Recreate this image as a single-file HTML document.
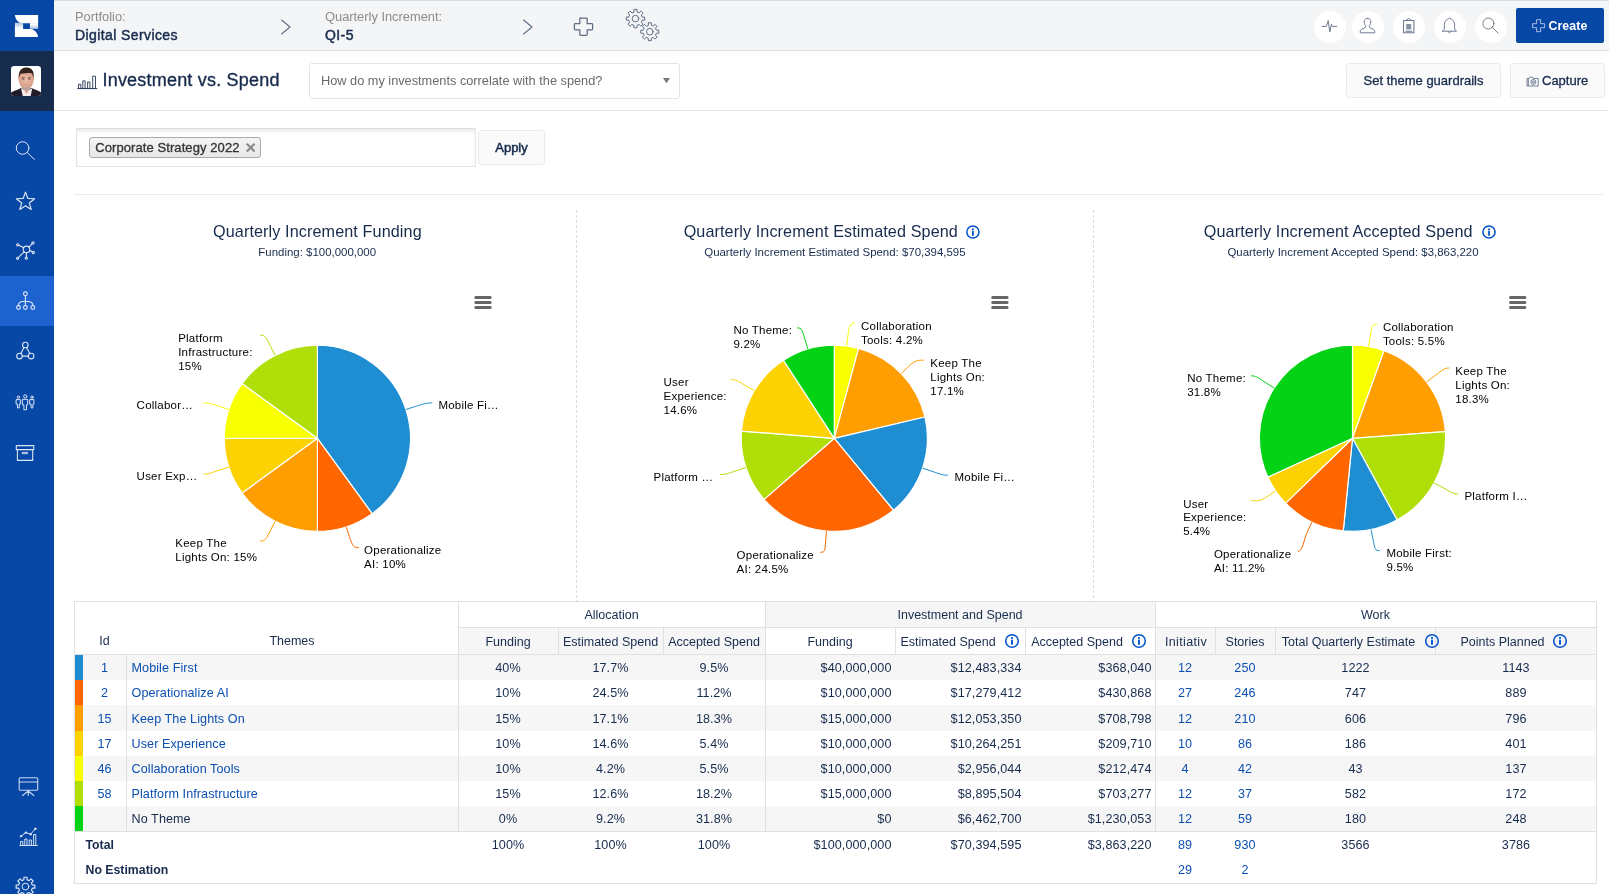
<!DOCTYPE html>
<html>
<head>
<meta charset="utf-8">
<title>Investment vs. Spend</title>
<style>
*{box-sizing:border-box;margin:0;padding:0}
html,body{width:1609px;height:894px;overflow:hidden;background:#fff}
body{will-change:transform;font-family:"Liberation Sans",sans-serif;color:#172b4d;position:relative;font-size:13px}
.abs{position:absolute}
/* sidebar */
#side{position:absolute;left:0;top:0;width:54px;height:894px;background:#0747a6}
#side .av{position:absolute;left:0;top:51px;width:54px;height:60px;background:#172b4d}
#side .sel{position:absolute;left:0;top:276px;width:54px;height:50px;background:#1d62ce}
#side svg{position:absolute;overflow:visible}
/* top bar */
#top{position:absolute;left:54px;top:0;width:1555px;height:51px;background:#f4f5f7;border-bottom:1px solid #dfe1e6;border-top:1px solid #d9dbe0}
.lbl{position:absolute;font-size:12.85px;color:#8c8c8c;white-space:nowrap;line-height:16px}
.val{position:absolute;font-size:14px;color:#172b4d;white-space:nowrap;line-height:18px;letter-spacing:0.4px;-webkit-text-stroke:0.45px #172b4d}
.circ{position:absolute;width:32px;height:32px;border-radius:50%;background:#fff;top:10.5px}
#create{position:absolute;left:1516px;top:8px;width:88px;height:35px;background:#0747a6;border-radius:2px;color:#fff;font-weight:bold;font-size:12.3px;line-height:37px}
/* header row */
#hdr{position:absolute;left:54px;top:51px;width:1555px;height:60px;border-bottom:1px solid #e4e6ea}
#title{position:absolute;left:102.5px;top:68px;font-size:18px;letter-spacing:0.2px;line-height:24px;color:#172b4d;white-space:nowrap;-webkit-text-stroke:0.35px #172b4d}
#dd{position:absolute;left:309px;top:63px;width:371px;height:36px;border:1px solid #e3e4e8;border-radius:3px;background:#fff;font-size:12.75px;color:#6a6a6a;line-height:34px;padding-left:11px;white-space:nowrap}
.btn{position:absolute;height:35px;background:#fafafa;border:1px solid #ebebeb;border-radius:3px;font-size:13px;line-height:33px;color:#172b4d;white-space:nowrap;text-align:center;-webkit-text-stroke:0.3px #172b4d}
#fbox{position:absolute;left:76px;top:128px;width:400px;height:39px;border:1px solid #e6e6e6;border-top-color:#dedede;background:#fff;box-shadow:inset 0 3px 4px -1px rgba(0,0,0,0.09)}
#tag{position:absolute;left:89px;top:137px;width:172px;height:21px;border:1px solid #aaa;border-radius:3px;background:linear-gradient(#f4f4f4,#e8e8e8);font-size:13px;line-height:19px;color:#333;padding-left:5.3px;white-space:nowrap;letter-spacing:0.08px;-webkit-text-stroke:0.3px #333}
#hr{position:absolute;left:74px;top:194px;width:1529px;height:1px;background:#e9ebee}
.vd{position:absolute;top:210px;height:391px;width:1px;background:repeating-linear-gradient(to bottom,#dcdcdc 0,#dcdcdc 3px,transparent 3px,transparent 5px)}
.ct{position:absolute;font-size:16.2px;letter-spacing:0.1px;line-height:20px;color:#172b4d;white-space:nowrap;text-align:center;transform:translateX(-50%)}
.cs{position:absolute;font-size:11.45px;line-height:14px;color:#172b4d;white-space:nowrap;text-align:center;transform:translateX(-50%)}
.tc{position:absolute;font-size:12.6px;letter-spacing:0.08px;line-height:15px;color:#172b4d;white-space:nowrap}
.tc.th{font-size:12.5px;letter-spacing:0}
.tc.lk{color:#0b4fb0}
.tc.b{font-weight:bold;font-size:12.3px;letter-spacing:0}
svg text{font-family:"Liberation Sans",sans-serif}
</style>
</head>
<body>
<div id="side">
  <div class="av"></div>
  <div class="sel"></div>

<svg style="left:0;top:0" width="54" height="894" viewBox="0 0 54 894" fill="none" stroke="#dde6f6" stroke-width="1" stroke-linecap="round" stroke-linejoin="round">
  <!-- logo -->
  <defs><linearGradient id="lg1" x1="0" y1="0" x2="0" y2="1"><stop offset="0" stop-color="#a9bfe2"/><stop offset="0.9" stop-color="#ffffff"/></linearGradient>
  <linearGradient id="lg2" x1="0" y1="0" x2="0" y2="1"><stop offset="0.2" stop-color="#ffffff"/><stop offset="1" stop-color="#a9bfe2"/></linearGradient></defs>
  <g stroke="none">
  <path d="M14.900,14.900 H38.100 V23.200 H22 C18,22.600 15.500,19.500 14.900,14.900Z" fill="#fff"/>
  <path d="M29.900,23.100 H38.100 V28.900 H29.900Z" fill="url(#lg2)"/>
  <path d="M14.900,22.700 H23.100 V29 H14.900Z" fill="url(#lg1)"/>
  <path d="M14.900,28.900 H31 C34.500,29.500 37.500,32.500 38.100,37 H14.900Z" fill="#fff"/>
  </g>
  <!-- search -->
  <circle cx="22.600" cy="148" r="6.300"/><path d="M27.200,152.600 L34.400,159.400"/>
  <!-- star -->
  <path d="M25.50,192.10 L27.85,198.46 L34.63,198.73 L29.30,202.94 L31.14,209.47 L25.50,205.70 L19.86,209.47 L21.70,202.94 L16.37,198.73 L23.15,198.46Z" stroke-width="1.2"/>
  <!-- network -->
  <g stroke-width="1.1"><circle cx="26.500" cy="249.400" r="3.300"/>
  <path d="M23.800,247.700 L18.800,245.300 M29,247.200 L32.200,243.700 M29.800,250.300 L32.200,252 M26.400,252.700 V257 M24.200,251.800 L18.400,257.400"/>
  <circle cx="17.700" cy="244.800" r="1.100"/><circle cx="33" cy="242.900" r="1.100"/><circle cx="33.300" cy="252.500" r="1.100"/><circle cx="26.300" cy="258.200" r="1.100"/><circle cx="17.600" cy="258.300" r="1.100"/></g>
  <!-- hierarchy -->
  <g stroke-width="1.100"><circle cx="25.400" cy="293.800" r="1.900"/><path d="M25.400,295.800 V305.500 M18.500,305.500 V304.800 C18.500,302 21,301.200 25.400,301.200 C29.800,301.200 32.800,302 32.800,304.800 V305.500"/>
  <circle cx="18.500" cy="307.500" r="1.900"/><circle cx="25.400" cy="307.500" r="1.900"/><circle cx="32.800" cy="307.500" r="1.900"/></g>
  <!-- triangle -->
  <g stroke-width="1.100"><circle cx="25.300" cy="345" r="2.800"/><circle cx="19.500" cy="356.100" r="2.800"/><circle cx="31.100" cy="356.100" r="2.800"/>
  <path d="M24,347.500 L20.800,353.600 M26.600,347.500 L29.800,353.600 M22.300,356.100 H28.300"/></g>
  <!-- people -->
  <g stroke-width="1"><circle cx="25.200" cy="396.400" r="1.600"/><path d="M22.700,399.300 h5 v5.500 h-1.200 v5 h-2.600 v-5 h-1.200z"/>
  <circle cx="18.400" cy="397.200" r="1.200"/><path d="M16.500,399.600 h3.800 v4.500 h-1 v3.800 h-1.800 v-3.800 h-1z"/>
  <circle cx="32" cy="397.200" r="1.200"/><path d="M30.100,399.600 h3.800 v4.500 h-1 v3.800 h-1.800 v-3.800 h-1z"/></g>
  <!-- archive -->
  <g stroke-width="1.100"><path d="M16.300,445.600 H33.800 V449.600 H16.300Z M17.400,449.600 V460.400 H32.700 V449.600"/><path d="M22.600,452.400 h5 v1.300 h-5z" stroke-width="0.900"/></g>
  <!-- presentation -->
  <g stroke-width="1.100" stroke="#c9d6ee"><rect x="19.200" y="777.800" width="18.500" height="12.500" rx="1"/><path d="M19.200,782 H37.700 M28.300,790.300 V795.500 M28.300,791 L22.500,795.500 M28.300,791 L33.800,795.500"/></g>
  <!-- chart -->
  <g stroke-width="1" stroke="#d5e0f3"><path d="M19.800,845.500 H37.400 M20.600,845.500 v-4 h2.200 v4 M24.800,845.500 v-6.500 h2.200 v6.500 M29.200,845.500 v-5.500 h2.200 v5.500 M33.600,845.500 v-11 h2.200 v11"/>
  <path d="M21.200,836 L25.800,832.700 L30.600,834.200 L35.200,829"/><circle cx="21" cy="836.200" r=".8" fill="#d5e0f3"/><circle cx="25.900" cy="832.600" r=".8" fill="#d5e0f3"/><circle cx="30.700" cy="834.300" r=".8" fill="#d5e0f3"/><circle cx="35.300" cy="828.800" r=".8" fill="#d5e0f3"/></g>
  <!-- gear -->
  <path d="M23.92,879.78 L23.94,877.23 L27.06,877.23 L27.08,879.78 L29.20,880.66 L31.02,878.87 L33.23,881.08 L31.44,882.90 L32.32,885.02 L34.87,885.04 L34.87,888.16 L32.32,888.18 L31.44,890.30 L33.23,892.12 L31.02,894.33 L29.20,892.54 L27.08,893.42 L27.06,895.97 L23.94,895.97 L23.92,893.42 L21.80,892.54 L19.98,894.33 L17.77,892.12 L19.56,890.30 L18.68,888.18 L16.13,888.16 L16.13,885.04 L18.68,885.02 L19.56,882.90 L17.77,881.08 L19.98,878.87 L21.80,880.66Z" stroke-width="1.200"/><circle cx="25.500" cy="886.600" r="3.400"/>
</svg>
<svg style="left:11px;top:66px" width="30" height="30" viewBox="0 0 30 30">
  <defs><clipPath id="avc"><rect x="0" y="0" width="30" height="30" rx="3.200"/></clipPath>
  <filter id="avb" x="-10%" y="-10%" width="120%" height="120%"><feGaussianBlur stdDeviation="0.550"/></filter>
  <radialGradient id="avf" cx="0.5" cy="0.45" r="0.6"><stop offset="0" stop-color="#e9bda8"/><stop offset="0.7" stop-color="#dca38c"/><stop offset="1" stop-color="#c98f7b"/></radialGradient></defs>
  <g clip-path="url(#avc)">
    <rect width="30" height="30" fill="#ffffff"/>
    <g filter="url(#avb)">
    <path d="M-1,31 V27 C3,25 7,23.500 10,22 L15,24 L20.500,22 C24,23.500 28,25 31,27 V31Z" fill="#231f2c"/>
    <path d="M10,22.500 L12,31 H19.500 L21.200,22.500 L15.500,24.500Z" fill="#f6eaee"/>
    <path d="M12.300,22 L15.500,28 L18.800,22Z" fill="#d79a84"/>
    <path d="M7.700,11.500 C7.500,8 9.500,5 15.200,5 C21,5 22.900,8 22.700,11.500 C23.300,12 23.200,14 22.500,14.800 C22,19.500 19,24 15.200,24 C11.500,24 8.500,19.500 7.900,14.800 C7.200,14 7.100,12 7.700,11.500Z" fill="url(#avf)"/>
    <path d="M11,19 C12,21 13.500,21.300 15.200,21.300 C17,21.300 18.500,21 19.500,19 C19.500,22 17.500,24.200 15.200,24.200 C13,24.200 11,22 11,19Z" fill="#b9a39c"/>
    <path d="M12.200,18.300 Q15.200,19.800 18.300,18.300 Q15.200,19 12.200,18.300Z" fill="#a8645a"/>
    <path d="M7.900,12.500 C7,6.500 9.500,1.500 15,1.500 C19,1.500 20.500,3 21,4 C22.600,5 23,9 22.400,12.500 C22,9.500 21.300,8 20.500,7.300 C17.500,6.300 13,8 9.700,7.500 C8.700,8.500 8.200,10.500 7.900,12.500Z" fill="#33211d"/>
    <ellipse cx="12.200" cy="13" rx="1.300" ry=".55" fill="#5a3a33"/><ellipse cx="18.300" cy="13" rx="1.300" ry=".55" fill="#5a3a33"/>
    <path d="M10.500,11.700 h3.200 M16.800,11.700 h3.200" stroke="#4a302a" stroke-width=".6"/>
    </g>
  </g>
</svg>
</div>
<div id="top"></div>
<div class="lbl" style="left:75px;top:9px">Portfolio:</div>
<div class="val" style="left:75px;top:26px">Digital Services</div>
<div class="lbl" style="left:325px;top:9px">Quarterly Increment:</div>
<div class="val" style="left:325px;top:26px">QI-5</div>
<svg class="abs" style="left:0;top:0" width="1609" height="52" viewBox="0 0 1609 52" fill="none" stroke="#5e6c84" stroke-width="1.05" stroke-linecap="round" stroke-linejoin="round">
  <path d="M281.6,20 L290,27 L281.6,34"/>
  <path d="M523.6,20 L532,27 L523.6,34"/>
  <path d="M580.6,18 h5.8 a0.8,0.8 0 0 1 .8,.8 v4.9 h4.6 a0.8,0.8 0 0 1 .8,.8 v4.6 a0.8,0.8 0 0 1 -.8,.8 h-4.6 v4.6 a0.8,0.8 0 0 1 -.8,.8 h-5.8 a0.8,0.8 0 0 1 -.8,-.8 v-4.6 h-4.6 a0.8,0.8 0 0 1 -.8,-.8 v-4.6 a0.8,0.8 0 0 1 .8,-.8 h4.6 v-4.9 a0.8,0.8 0 0 1 .8,-.8z" stroke-width="1.25"/>
  <path d="M633.94,11.88 L633.97,9.43 L637.03,9.43 L637.06,11.88 L639.15,12.75 L640.91,11.03 L643.07,13.19 L641.35,14.95 L642.22,17.04 L644.67,17.07 L644.67,20.13 L642.22,20.16 L641.35,22.25 L643.07,24.01 L640.91,26.17 L639.15,24.45 L637.06,25.32 L637.03,27.77 L633.97,27.77 L633.94,25.32 L631.85,24.45 L630.09,26.17 L627.93,24.01 L629.65,22.25 L628.78,20.16 L626.33,20.13 L626.33,17.07 L628.78,17.04 L629.65,14.95 L627.93,13.19 L630.09,11.03 L631.85,12.75Z" stroke-width="1"/><circle cx="635.5" cy="18.6" r="3.3" stroke-width="1"/>
  <path d="M648.29,25.17 L648.31,22.72 L651.29,22.72 L651.31,25.17 L653.35,26.01 L655.09,24.30 L657.20,26.41 L655.49,28.15 L656.33,30.19 L658.78,30.21 L658.78,33.19 L656.33,33.21 L655.49,35.25 L657.20,36.99 L655.09,39.10 L653.35,37.39 L651.31,38.23 L651.29,40.68 L648.31,40.68 L648.29,38.23 L646.25,37.39 L644.51,39.10 L642.40,36.99 L644.11,35.25 L643.27,33.21 L640.82,33.19 L640.82,30.21 L643.27,30.19 L644.11,28.15 L642.40,26.41 L644.51,24.30 L646.25,26.01Z" stroke-width="1"/><circle cx="649.8" cy="31.7" r="3.3" stroke-width="1"/>
</svg>
<div class="circ" style="left:1314px"></div>
<div class="circ" style="left:1352px"></div>
<div class="circ" style="left:1393px"></div>
<div class="circ" style="left:1434px"></div>
<div class="circ" style="left:1475px"></div>
<svg class="abs" style="left:0;top:0" width="1609" height="52" viewBox="0 0 1609 52" fill="none" stroke="#6f7b93" stroke-width="1" stroke-linecap="round" stroke-linejoin="round">
  <!-- pulse -->
  <path d="M1322,26.4 H1326.3 L1328.2,20.6 L1329.8,32 L1331.4,24.3 L1332.4,26.4 H1336.8" stroke-width="1"/>
  <!-- person -->
  <path d="M1367.6,18.3 c-2.3,0 -3.5,1.6 -3.4,3.8 c.1,1.7 .7,2.8 1.4,3.6 c.2,.9 .1,1.6 -.5,2 l-3.4,1.5 c-1,.5 -1.5,1.400 -1.500,2.500 v1.100 h14.600 v-1.100 c0,-1.100 -.5,-2 -1.500,-2.500 l-3.400,-1.500 c-.6,-.4 -.7,-1.100 -.5,-2 c.7,-.8 1.300,-1.900 1.400,-3.600 c.1,-2.200 -1.100,-3.800 -3.200,-3.800z"/>
  <!-- clipboard -->
  <path d="M1403.500,20.500 h10.400 v12.300 h-10.400z" stroke-width="1.100"/>
  <path d="M1406.300,20.300 l2.400,-2 l2.400,2"/>
  <rect x="1406.200" y="24" width="5" height="5.500" fill="#8892a6" stroke="none"/>
  <path d="M1405.800,31.300 h6"/>
  <!-- bell -->
  <path d="M1442.500,31.200 H1456.500 L1454.600,28.800 V24.200 C1454.600,21.600 1452.600,19.600 1449.500,18.100 C1446.400,19.600 1444.400,21.600 1444.400,24.200 V28.800Z"/>
  <path d="M1448,31.600 l1.500,1.200 l1.500,-1.200"/>
</svg>
<svg class="abs" style="left:0;top:0" width="1609" height="52" viewBox="0 0 1609 52" fill="none" stroke="#757575" stroke-width="0.95" stroke-linecap="round">
  <circle cx="1488.400" cy="23.500" r="5.500"/><path d="M1492.400,27.500 L1498,33"/>
</svg>
<div id="create"><span style="position:absolute;left:32.500px;top:0;letter-spacing:0.1px">Create</span>
<svg class="abs" style="left:0;top:0" width="88" height="35" viewBox="0 0 88 35" fill="none" stroke="#c4d3ee" stroke-width="0.85" stroke-linejoin="round"><path d="M20.600,11.700 h4 v4 h4 v4 h-4 v4 h-4 v-4 h-4 v-4 h4z"/></svg>
</div>

<div id="hdr"></div>
<div id="title">Investment vs. Spend</div>
<div id="dd">How do my investments correlate with the spend?</div>
<div id="fbox"></div>
<div id="tag">Corporate Strategy 2022</div>

<svg class="abs" style="left:74px;top:70px" width="28" height="22" viewBox="74 70 28 22" fill="none" stroke="#253858" stroke-width="0.9">
  <path d="M77.200,88.600 H97.200" stroke-width="1"/>
  <path d="M78.500,88.600 V84.300 H80.800 V88.600 M82.800,88.600 V80.900 H85.100 V88.600 M87.600,88.600 V82 H89.900 V88.600 M92.700,88.600 V76.200 H95.500 V88.600"/>
</svg>
<svg class="abs" style="left:660px;top:74px" width="14" height="12" viewBox="660 74 14 12"><path d="M663,78.100 H670 L666.500,83.200Z" fill="#777"/></svg>
<div class="btn" style="left:1346px;top:63px;width:155px"><span id="b1">Set theme guardrails</span></div>
<div class="btn" style="left:1510px;top:63px;width:95px"><span id="b2" style="position:absolute;left:31px;top:0">Capture</span>
<svg class="abs" style="left:15px;top:12px" width="14" height="12" viewBox="0 0 14 12" fill="none" stroke="#66738c" stroke-width="0.9"><path d="M1,2.500 h2 l.6,-1.300 h3 l.6,1.300 h5 v7.500 h-11.200z"/><circle cx="7.300" cy="6" r="2.500"/><circle cx="7.300" cy="6" r="1"/><path d="M2.300,2.500 v7.500"/></svg>
</div>
<div class="btn" style="left:478px;top:130px;width:67px" id="apply"><span id="b3" style="-webkit-text-stroke:0.5px #172b4d">Apply</span></div>
<svg class="abs" style="left:244px;top:141px" width="13" height="13" viewBox="244 141 13 13" stroke="#8a8a8a" stroke-width="2.200" fill="none"><path d="M246.800,143.800 L254.600,151.500 M254.600,143.800 L246.800,151.500"/></svg>
<div id="hr"></div>
<div class="vd" style="left:576px"></div>
<div class="vd" style="left:1093px"></div>
<!--CHARTS-->
<div class="ct" style="left:317.4px;top:221px">Quarterly Increment Funding</div>
<div class="cs" style="left:317.2px;top:245px">Funding: $100,000,000</div>
<div class="ct" style="left:820.8px;top:221px">Quarterly Increment Estimated Spend</div>
<div class="cs" style="left:834.9px;top:245px">Quarterly Increment Estimated Spend: $70,394,595</div>
<div class="ct" style="left:1338.2px;top:221px">Quarterly Increment Accepted Spend</div>
<div class="cs" style="left:1353px;top:245px">Quarterly Increment Accepted Spend: $3,863,220</div>
<svg class="abs" style="left:0;top:200px" width="1609" height="400" viewBox="0 200 1609 400" font-size="11.5" letter-spacing="0.23" fill="#000">
<circle cx="972.9" cy="232" r="6.1" fill="none" stroke="#0052cc" stroke-width="1.5"/><circle cx="972.9" cy="229.2" r="1" fill="#0052cc"/><path d="M972.9,231.4 V235.1" stroke="#0052cc" stroke-width="1.8" stroke-linecap="round"/><circle cx="1489" cy="232" r="6.1" fill="none" stroke="#0052cc" stroke-width="1.5"/><circle cx="1489" cy="229.2" r="1" fill="#0052cc"/><path d="M1489,231.4 V235.1" stroke="#0052cc" stroke-width="1.8" stroke-linecap="round"/>
<path d="M475.8,297.55 H490.2 M475.8,302.5 H490.2 M475.8,307.45 H490.2" stroke="#666" stroke-width="3" stroke-linecap="round" fill="none"/><path d="M992.6999999999999,297.55 H1007.1 M992.6999999999999,302.5 H1007.1 M992.6999999999999,307.45 H1007.1" stroke="#666" stroke-width="3" stroke-linecap="round" fill="none"/><path d="M1510.5,297.55 H1524.9 M1510.5,302.5 H1524.9 M1510.5,307.45 H1524.9" stroke="#666" stroke-width="3" stroke-linecap="round" fill="none"/>
<path d="M317.40,438.30 L317.40,345.20 A93.1,93.1 0 0 1 372.12,513.62Z" fill="#1f8dd1" stroke="#fff" stroke-width="1.2" stroke-linejoin="round"/>
<path d="M317.40,438.30 L372.12,513.62 A93.1,93.1 0 0 1 317.40,531.40Z" fill="#ff6600" stroke="#fff" stroke-width="1.2" stroke-linejoin="round"/>
<path d="M317.40,438.30 L317.40,531.40 A93.1,93.1 0 0 1 242.08,493.02Z" fill="#ff9e01" stroke="#fff" stroke-width="1.2" stroke-linejoin="round"/>
<path d="M317.40,438.30 L242.08,493.02 A93.1,93.1 0 0 1 224.30,438.30Z" fill="#fcd202" stroke="#fff" stroke-width="1.2" stroke-linejoin="round"/>
<path d="M317.40,438.30 L224.30,438.30 A93.1,93.1 0 0 1 242.08,383.58Z" fill="#f8ff01" stroke="#fff" stroke-width="1.2" stroke-linejoin="round"/>
<path d="M317.40,438.30 L242.08,383.58 A93.1,93.1 0 0 1 317.40,345.20Z" fill="#b0de09" stroke="#fff" stroke-width="1.2" stroke-linejoin="round"/>
<path d="M432.2,402.9 C427.2,402.9 425.0,403.4 415.5,406.4 L405.9,409.5" fill="none" stroke="#1f8dd1" stroke-width="1"/>
<text x="438.4" y="408.7">Mobile Fi…</text>
<path d="M358.9,547.7 C353.9,547.7 352.3,545.9 349.3,536.4 L346.2,526.8" fill="none" stroke="#ff6600" stroke-width="1"/>
<text x="364.1" y="554.1">Operationalize</text>
<text x="364.1" y="568.0">AI: 10%</text>
<path d="M260.2,541.1 C265.2,541.1 266.1,539.1 270.6,530.2 L275.1,521.3" fill="none" stroke="#ff9e01" stroke-width="1"/>
<text x="175.3" y="546.9">Keep The</text>
<text x="175.3" y="560.8">Lights On: 15%</text>
<path d="M203.5,474.2 C208.5,474.2 209.8,473.2 219.3,470.2 L228.9,467.1" fill="none" stroke="#fcd202" stroke-width="1"/>
<text x="136.6" y="480.0">User Exp…</text>
<path d="M203.5,402.9 C208.5,402.9 209.8,403.4 219.3,406.4 L228.9,409.5" fill="none" stroke="#f8ff01" stroke-width="1"/>
<text x="136.6" y="408.7">Collabor…</text>
<path d="M260.2,335.1 C265.2,335.1 266.1,337.5 270.6,346.4 L275.1,355.3" fill="none" stroke="#b0de09" stroke-width="1"/>
<text x="178.2" y="342.1">Platform</text>
<text x="178.2" y="356.0">Infrastructure:</text>
<text x="178.2" y="369.9">15%</text>
<path d="M834.30,438.30 L834.30,345.20 A93.1,93.1 0 0 1 858.58,348.42Z" fill="#f8ff01" stroke="#fff" stroke-width="1.2" stroke-linejoin="round"/>
<path d="M834.30,438.30 L858.58,348.42 A93.1,93.1 0 0 1 924.92,416.97Z" fill="#ff9e01" stroke="#fff" stroke-width="1.2" stroke-linejoin="round"/>
<path d="M834.30,438.30 L924.92,416.97 A93.1,93.1 0 0 1 893.40,510.24Z" fill="#1f8dd1" stroke="#fff" stroke-width="1.2" stroke-linejoin="round"/>
<path d="M834.30,438.30 L893.40,510.24 A93.1,93.1 0 0 1 764.07,499.42Z" fill="#ff6600" stroke="#fff" stroke-width="1.2" stroke-linejoin="round"/>
<path d="M834.30,438.30 L764.07,499.42 A93.1,93.1 0 0 1 741.48,431.06Z" fill="#b0de09" stroke="#fff" stroke-width="1.2" stroke-linejoin="round"/>
<path d="M834.30,438.30 L741.48,431.06 A93.1,93.1 0 0 1 783.53,360.26Z" fill="#fcd202" stroke="#fff" stroke-width="1.2" stroke-linejoin="round"/>
<path d="M834.30,438.30 L783.53,360.26 A93.1,93.1 0 0 1 834.30,345.20Z" fill="#04d215" stroke="#fff" stroke-width="1.2" stroke-linejoin="round"/>
<path d="M854.8,323.2 C849.8,323.2 849.2,326.2 847.9,336.1 L846.5,346.0" fill="none" stroke="#f8ff01" stroke-width="1"/>
<text x="861.0" y="329.7">Collaboration</text>
<text x="861.0" y="343.6">Tools: 4.2%</text>
<path d="M923.7,360.2 C918.7,360.2 915.6,359.6 908.4,366.6 L901.2,373.6" fill="none" stroke="#ff9e01" stroke-width="1"/>
<text x="930.3" y="367.0">Keep The</text>
<text x="930.3" y="380.9">Lights On:</text>
<text x="930.3" y="394.8">17.1%</text>
<path d="M947.9,475.2 C942.9,475.2 941.4,474.5 932.0,471.3 L922.5,468.1" fill="none" stroke="#1f8dd1" stroke-width="1"/>
<text x="954.5" y="480.8">Mobile Fi…</text>
<path d="M820.3,552.3 C825.3,552.3 824.9,551.0 825.7,541.0 L826.5,531.1" fill="none" stroke="#ff6600" stroke-width="1"/>
<text x="736.6" y="558.6">Operationalize</text>
<text x="736.6" y="572.5">AI: 24.5%</text>
<path d="M720.0,474.6 C725.0,474.6 726.9,473.8 736.4,470.7 L745.9,467.5" fill="none" stroke="#b0de09" stroke-width="1"/>
<text x="653.5" y="480.8">Platform …</text>
<path d="M730.9,379.6 C735.9,379.6 737.1,380.6 745.7,385.7 L754.3,390.8" fill="none" stroke="#fcd202" stroke-width="1"/>
<text x="663.5" y="386.2">User</text>
<text x="663.5" y="400.1">Experience:</text>
<text x="663.5" y="414.0">14.6%</text>
<path d="M797.1,327.9 C802.1,327.9 802.1,329.9 805.0,339.5 L807.8,349.0" fill="none" stroke="#04d215" stroke-width="1"/>
<text x="733.4" y="334.1">No Theme:</text>
<text x="733.4" y="348.0">9.2%</text>
<path d="M1352.50,438.30 L1352.50,345.20 A93.1,93.1 0 0 1 1384.04,350.70Z" fill="#f8ff01" stroke="#fff" stroke-width="1.2" stroke-linejoin="round"/>
<path d="M1352.50,438.30 L1384.04,350.70 A93.1,93.1 0 0 1 1445.36,431.56Z" fill="#ff9e01" stroke="#fff" stroke-width="1.2" stroke-linejoin="round"/>
<path d="M1352.50,438.30 L1445.36,431.56 A93.1,93.1 0 0 1 1397.09,520.03Z" fill="#b0de09" stroke="#fff" stroke-width="1.2" stroke-linejoin="round"/>
<path d="M1352.50,438.30 L1397.09,520.03 A93.1,93.1 0 0 1 1343.28,530.94Z" fill="#1f8dd1" stroke="#fff" stroke-width="1.2" stroke-linejoin="round"/>
<path d="M1352.50,438.30 L1343.28,530.94 A93.1,93.1 0 0 1 1285.72,503.17Z" fill="#ff6600" stroke="#fff" stroke-width="1.2" stroke-linejoin="round"/>
<path d="M1352.50,438.30 L1285.72,503.17 A93.1,93.1 0 0 1 1267.87,477.09Z" fill="#fcd202" stroke="#fff" stroke-width="1.2" stroke-linejoin="round"/>
<path d="M1352.50,438.30 L1267.87,477.09 A93.1,93.1 0 0 1 1352.50,345.20Z" fill="#04d215" stroke="#fff" stroke-width="1.2" stroke-linejoin="round"/>
<path d="M1376.7,324.1 C1371.7,324.1 1371.9,326.9 1370.2,336.7 L1368.5,346.6" fill="none" stroke="#f8ff01" stroke-width="1"/>
<text x="1382.9" y="331.0">Collaboration</text>
<text x="1382.9" y="344.9">Tools: 5.5%</text>
<path d="M1449.1,368.0 C1444.1,368.0 1442.6,370.0 1434.6,376.0 L1426.7,382.0" fill="none" stroke="#ff9e01" stroke-width="1"/>
<text x="1455.3" y="374.9">Keep The</text>
<text x="1455.3" y="388.8">Lights On:</text>
<text x="1455.3" y="402.7">18.3%</text>
<path d="M1458.2,494.0 C1453.2,494.0 1451.8,492.5 1443.0,487.7 L1434.2,482.9" fill="none" stroke="#b0de09" stroke-width="1"/>
<text x="1464.4" y="499.6">Platform I…</text>
<path d="M1379.8,550.7 C1374.8,550.7 1375.0,549.1 1373.0,539.3 L1371.0,529.5" fill="none" stroke="#1f8dd1" stroke-width="1"/>
<text x="1386.4" y="556.7">Mobile First:</text>
<text x="1386.4" y="570.6">9.5%</text>
<path d="M1297.9,551.3 C1302.9,551.3 1303.4,540.2 1307.7,531.2 L1312.0,522.1" fill="none" stroke="#ff6600" stroke-width="1"/>
<text x="1213.9" y="557.6">Operationalize</text>
<text x="1213.9" y="571.5">AI: 11.2%</text>
<path d="M1250.9,500.6 C1255.9,500.6 1259.2,502.2 1267.4,496.5 L1275.7,490.9" fill="none" stroke="#fcd202" stroke-width="1"/>
<text x="1183.2" y="507.5">User</text>
<text x="1183.2" y="521.4">Experience:</text>
<text x="1183.2" y="535.3">5.4%</text>
<path d="M1250.9,375.8 C1255.9,375.8 1257.3,377.2 1265.7,382.6 L1274.1,388.0" fill="none" stroke="#04d215" stroke-width="1"/>
<text x="1187.2" y="382.1">No Theme:</text>
<text x="1187.2" y="396.0">31.8%</text>
</svg>
<!--/CHARTS-->
<!--TABLE-->
<div class="abs" style="left:458px;top:627px;width:307px;height:27px;background:#f6f6f7"></div>
<div class="abs" style="left:765px;top:601px;width:390px;height:26px;background:#f6f6f7"></div>
<div class="abs" style="left:1155px;top:627px;width:441px;height:27px;background:#f6f6f7"></div>
<div class="abs" style="left:83px;top:655.0px;width:1513px;height:25.2px;background:#f6f6f7"></div>
<div class="abs" style="left:75px;top:655.0px;width:8px;height:25.4px;background:#1f8dd1"></div>
<div class="abs" style="left:75px;top:680.2px;width:8px;height:25.4px;background:#ff6600"></div>
<div class="abs" style="left:83px;top:705.4px;width:1513px;height:25.2px;background:#f6f6f7"></div>
<div class="abs" style="left:75px;top:705.4px;width:8px;height:25.4px;background:#ff9e01"></div>
<div class="abs" style="left:75px;top:730.6px;width:8px;height:25.4px;background:#fcd202"></div>
<div class="abs" style="left:83px;top:755.8px;width:1513px;height:25.2px;background:#f6f6f7"></div>
<div class="abs" style="left:75px;top:755.8px;width:8px;height:25.4px;background:#f8ff01"></div>
<div class="abs" style="left:75px;top:781.0px;width:8px;height:25.4px;background:#b0de09"></div>
<div class="abs" style="left:83px;top:806.2px;width:1513px;height:25.2px;background:#f6f6f7"></div>
<div class="abs" style="left:75px;top:806.2px;width:8px;height:25.4px;background:#04d215"></div>
<div class="abs" style="left:74px;top:601px;width:1523px;height:1px;background:#dfe0e2"></div>
<div class="abs" style="left:458px;top:627px;width:1138px;height:1px;background:#dfe0e2"></div>
<div class="abs" style="left:74px;top:654px;width:1523px;height:1px;background:#dfe0e2"></div>
<div class="abs" style="left:74px;top:831.4px;width:1523px;height:1px;background:#dfe0e2"></div>
<div class="abs" style="left:74px;top:883px;width:1523px;height:1px;background:#dfe0e2"></div>
<div class="abs" style="left:74px;top:601px;width:1px;height:283px;background:#dfe0e2"></div>
<div class="abs" style="left:1596px;top:601px;width:1px;height:283px;background:#dfe0e2"></div>
<div class="abs" style="left:458px;top:601px;width:1px;height:230.4px;background:#dfe0e2"></div>
<div class="abs" style="left:765px;top:601px;width:1px;height:230.4px;background:#dfe0e2"></div>
<div class="abs" style="left:1155px;top:601px;width:1px;height:230.4px;background:#dfe0e2"></div>
<div class="abs" style="left:126px;top:654px;width:1px;height:177.4px;background:#dfe0e2"></div>
<div class="abs" style="left:558px;top:627px;width:1px;height:27px;background:#dfe0e2"></div>
<div class="abs" style="left:663px;top:627px;width:1px;height:27px;background:#dfe0e2"></div>
<div class="abs" style="left:895px;top:627px;width:1px;height:27px;background:#dfe0e2"></div>
<div class="abs" style="left:1025px;top:627px;width:1px;height:27px;background:#dfe0e2"></div>
<div class="abs" style="left:1215px;top:627px;width:1px;height:27px;background:#dfe0e2"></div>
<div class="abs" style="left:1275px;top:627px;width:1px;height:27px;background:#dfe0e2"></div>
<div class="abs" style="left:1435px;top:627px;width:1px;height:27px;background:#dfe0e2"></div>
<div class="tc th" style="left:458px;top:607.6px;width:307px;text-align:center">Allocation</div>
<div class="tc th" style="left:765px;top:607.6px;width:390px;text-align:center">Investment and Spend</div>
<div class="tc th" style="left:1155px;top:607.6px;width:441px;text-align:center">Work</div>
<div class="tc th" style="left:83px;top:634.4px;width:43px;text-align:center">Id</div>
<div class="tc th" style="left:126px;top:634.4px;width:332px;text-align:center">Themes</div>
<div class="tc th" style="left:458px;top:634.8px;width:100px;text-align:center">Funding</div>
<div class="tc th" style="left:558px;top:634.8px;width:105px;text-align:center">Estimated Spend</div>
<div class="tc th" style="left:663px;top:634.8px;width:102px;text-align:center">Accepted Spend</div>
<div class="tc th" style="left:765px;top:634.8px;width:130px;text-align:center">Funding</div>
<div class="tc th" style="left:895px;top:634.8px;width:106px;text-align:center">Estimated Spend</div>
<div class="tc th" style="left:1025px;top:634.8px;width:104px;text-align:center">Accepted Spend</div>
<div class="tc th" style="left:1156px;top:634.8px;width:60px;text-align:center"><span style="letter-spacing:0.35px">Initiativ</span></div>
<div class="tc th" style="left:1215px;top:634.8px;width:60px;text-align:center">Stories</div>
<div class="tc th" style="left:1275px;top:634.8px;width:147px;text-align:center">Total Quarterly Estimate</div>
<div class="tc th" style="left:1436px;top:634.8px;width:133px;text-align:center">Points Planned</div>
<svg class="abs" style="left:1003.5px;top:633px" width="16" height="16" viewBox="-8 -8 16 16"><circle cx="0" cy="0" r="6.3" fill="none" stroke="#0052cc" stroke-width="1.5"/><circle cx="0" cy="-2.9" r="1.05" fill="#0052cc"/><path d="M0,-.5 V3.1" stroke="#0052cc" stroke-width="1.9" stroke-linecap="round"/></svg>
<svg class="abs" style="left:1130.5px;top:633px" width="16" height="16" viewBox="-8 -8 16 16"><circle cx="0" cy="0" r="6.3" fill="none" stroke="#0052cc" stroke-width="1.5"/><circle cx="0" cy="-2.9" r="1.05" fill="#0052cc"/><path d="M0,-.5 V3.1" stroke="#0052cc" stroke-width="1.9" stroke-linecap="round"/></svg>
<svg class="abs" style="left:1423.5px;top:633px" width="16" height="16" viewBox="-8 -8 16 16"><circle cx="0" cy="0" r="6.3" fill="none" stroke="#0052cc" stroke-width="1.5"/><circle cx="0" cy="-2.9" r="1.05" fill="#0052cc"/><path d="M0,-.5 V3.1" stroke="#0052cc" stroke-width="1.9" stroke-linecap="round"/></svg>
<svg class="abs" style="left:1552px;top:633px" width="16" height="16" viewBox="-8 -8 16 16"><circle cx="0" cy="0" r="6.3" fill="none" stroke="#0052cc" stroke-width="1.5"/><circle cx="0" cy="-2.9" r="1.05" fill="#0052cc"/><path d="M0,-.5 V3.1" stroke="#0052cc" stroke-width="1.9" stroke-linecap="round"/></svg>
<div class="tc lk" style="left:83px;top:661.0px;width:43px;text-align:center">1</div>
<div class="tc lk" style="left:131.5px;top:661.0px;width:320px;text-align:left">Mobile First</div>
<div class="tc " style="left:458px;top:661.0px;width:100px;text-align:center">40%</div>
<div class="tc " style="left:558px;top:661.0px;width:105px;text-align:center">17.7%</div>
<div class="tc " style="left:663px;top:661.0px;width:102px;text-align:center">9.5%</div>
<div class="tc " style="left:765px;top:661.0px;width:126.5px;text-align:right">$40,000,000</div>
<div class="tc " style="left:895px;top:661.0px;width:126.5px;text-align:right">$12,483,334</div>
<div class="tc " style="left:1025px;top:661.0px;width:126.5px;text-align:right">$368,040</div>
<div class="tc lk" style="left:1155px;top:661.0px;width:60px;text-align:center">12</div>
<div class="tc lk" style="left:1215px;top:661.0px;width:60px;text-align:center">250</div>
<div class="tc " style="left:1275px;top:661.0px;width:161px;text-align:center">1222</div>
<div class="tc " style="left:1436px;top:661.0px;width:160px;text-align:center">1143</div>
<div class="tc lk" style="left:83px;top:686.0px;width:43px;text-align:center">2</div>
<div class="tc lk" style="left:131.5px;top:686.0px;width:320px;text-align:left">Operationalize AI</div>
<div class="tc " style="left:458px;top:686.0px;width:100px;text-align:center">10%</div>
<div class="tc " style="left:558px;top:686.0px;width:105px;text-align:center">24.5%</div>
<div class="tc " style="left:663px;top:686.0px;width:102px;text-align:center">11.2%</div>
<div class="tc " style="left:765px;top:686.0px;width:126.5px;text-align:right">$10,000,000</div>
<div class="tc " style="left:895px;top:686.0px;width:126.5px;text-align:right">$17,279,412</div>
<div class="tc " style="left:1025px;top:686.0px;width:126.5px;text-align:right">$430,868</div>
<div class="tc lk" style="left:1155px;top:686.0px;width:60px;text-align:center">27</div>
<div class="tc lk" style="left:1215px;top:686.0px;width:60px;text-align:center">246</div>
<div class="tc " style="left:1275px;top:686.0px;width:161px;text-align:center">747</div>
<div class="tc " style="left:1436px;top:686.0px;width:160px;text-align:center">889</div>
<div class="tc lk" style="left:83px;top:712.0px;width:43px;text-align:center">15</div>
<div class="tc lk" style="left:131.5px;top:712.0px;width:320px;text-align:left">Keep The Lights On</div>
<div class="tc " style="left:458px;top:712.0px;width:100px;text-align:center">15%</div>
<div class="tc " style="left:558px;top:712.0px;width:105px;text-align:center">17.1%</div>
<div class="tc " style="left:663px;top:712.0px;width:102px;text-align:center">18.3%</div>
<div class="tc " style="left:765px;top:712.0px;width:126.5px;text-align:right">$15,000,000</div>
<div class="tc " style="left:895px;top:712.0px;width:126.5px;text-align:right">$12,053,350</div>
<div class="tc " style="left:1025px;top:712.0px;width:126.5px;text-align:right">$708,798</div>
<div class="tc lk" style="left:1155px;top:712.0px;width:60px;text-align:center">12</div>
<div class="tc lk" style="left:1215px;top:712.0px;width:60px;text-align:center">210</div>
<div class="tc " style="left:1275px;top:712.0px;width:161px;text-align:center">606</div>
<div class="tc " style="left:1436px;top:712.0px;width:160px;text-align:center">796</div>
<div class="tc lk" style="left:83px;top:737.0px;width:43px;text-align:center">17</div>
<div class="tc lk" style="left:131.5px;top:737.0px;width:320px;text-align:left">User Experience</div>
<div class="tc " style="left:458px;top:737.0px;width:100px;text-align:center">10%</div>
<div class="tc " style="left:558px;top:737.0px;width:105px;text-align:center">14.6%</div>
<div class="tc " style="left:663px;top:737.0px;width:102px;text-align:center">5.4%</div>
<div class="tc " style="left:765px;top:737.0px;width:126.5px;text-align:right">$10,000,000</div>
<div class="tc " style="left:895px;top:737.0px;width:126.5px;text-align:right">$10,264,251</div>
<div class="tc " style="left:1025px;top:737.0px;width:126.5px;text-align:right">$209,710</div>
<div class="tc lk" style="left:1155px;top:737.0px;width:60px;text-align:center">10</div>
<div class="tc lk" style="left:1215px;top:737.0px;width:60px;text-align:center">86</div>
<div class="tc " style="left:1275px;top:737.0px;width:161px;text-align:center">186</div>
<div class="tc " style="left:1436px;top:737.0px;width:160px;text-align:center">401</div>
<div class="tc lk" style="left:83px;top:762.0px;width:43px;text-align:center">46</div>
<div class="tc lk" style="left:131.5px;top:762.0px;width:320px;text-align:left">Collaboration Tools</div>
<div class="tc " style="left:458px;top:762.0px;width:100px;text-align:center">10%</div>
<div class="tc " style="left:558px;top:762.0px;width:105px;text-align:center">4.2%</div>
<div class="tc " style="left:663px;top:762.0px;width:102px;text-align:center">5.5%</div>
<div class="tc " style="left:765px;top:762.0px;width:126.5px;text-align:right">$10,000,000</div>
<div class="tc " style="left:895px;top:762.0px;width:126.5px;text-align:right">$2,956,044</div>
<div class="tc " style="left:1025px;top:762.0px;width:126.5px;text-align:right">$212,474</div>
<div class="tc lk" style="left:1155px;top:762.0px;width:60px;text-align:center">4</div>
<div class="tc lk" style="left:1215px;top:762.0px;width:60px;text-align:center">42</div>
<div class="tc " style="left:1275px;top:762.0px;width:161px;text-align:center">43</div>
<div class="tc " style="left:1436px;top:762.0px;width:160px;text-align:center">137</div>
<div class="tc lk" style="left:83px;top:787.0px;width:43px;text-align:center">58</div>
<div class="tc lk" style="left:131.5px;top:787.0px;width:320px;text-align:left">Platform Infrastructure</div>
<div class="tc " style="left:458px;top:787.0px;width:100px;text-align:center">15%</div>
<div class="tc " style="left:558px;top:787.0px;width:105px;text-align:center">12.6%</div>
<div class="tc " style="left:663px;top:787.0px;width:102px;text-align:center">18.2%</div>
<div class="tc " style="left:765px;top:787.0px;width:126.5px;text-align:right">$15,000,000</div>
<div class="tc " style="left:895px;top:787.0px;width:126.5px;text-align:right">$8,895,504</div>
<div class="tc " style="left:1025px;top:787.0px;width:126.5px;text-align:right">$703,277</div>
<div class="tc lk" style="left:1155px;top:787.0px;width:60px;text-align:center">12</div>
<div class="tc lk" style="left:1215px;top:787.0px;width:60px;text-align:center">37</div>
<div class="tc " style="left:1275px;top:787.0px;width:161px;text-align:center">582</div>
<div class="tc " style="left:1436px;top:787.0px;width:160px;text-align:center">172</div>
<div class="tc lk" style="left:83px;top:812.0px;width:43px;text-align:center"></div>
<div class="tc " style="left:131.5px;top:812.0px;width:320px;text-align:left">No Theme</div>
<div class="tc " style="left:458px;top:812.0px;width:100px;text-align:center">0%</div>
<div class="tc " style="left:558px;top:812.0px;width:105px;text-align:center">9.2%</div>
<div class="tc " style="left:663px;top:812.0px;width:102px;text-align:center">31.8%</div>
<div class="tc " style="left:765px;top:812.0px;width:126.5px;text-align:right">$0</div>
<div class="tc " style="left:895px;top:812.0px;width:126.5px;text-align:right">$6,462,700</div>
<div class="tc " style="left:1025px;top:812.0px;width:126.5px;text-align:right">$1,230,053</div>
<div class="tc lk" style="left:1155px;top:812.0px;width:60px;text-align:center">12</div>
<div class="tc lk" style="left:1215px;top:812.0px;width:60px;text-align:center">59</div>
<div class="tc " style="left:1275px;top:812.0px;width:161px;text-align:center">180</div>
<div class="tc " style="left:1436px;top:812.0px;width:160px;text-align:center">248</div>
<div class="tc b" style="left:85.5px;top:838.0px;width:200px;text-align:left">Total</div>
<div class="tc " style="left:458px;top:838.0px;width:100px;text-align:center">100%</div>
<div class="tc " style="left:558px;top:838.0px;width:105px;text-align:center">100%</div>
<div class="tc " style="left:663px;top:838.0px;width:102px;text-align:center">100%</div>
<div class="tc " style="left:765px;top:838.0px;width:126.5px;text-align:right">$100,000,000</div>
<div class="tc " style="left:895px;top:838.0px;width:126.5px;text-align:right">$70,394,595</div>
<div class="tc " style="left:1025px;top:838.0px;width:126.5px;text-align:right">$3,863,220</div>
<div class="tc lk" style="left:1155px;top:838.0px;width:60px;text-align:center">89</div>
<div class="tc lk" style="left:1215px;top:838.0px;width:60px;text-align:center">930</div>
<div class="tc " style="left:1275px;top:838.0px;width:161px;text-align:center">3566</div>
<div class="tc " style="left:1436px;top:838.0px;width:160px;text-align:center">3786</div>
<div class="tc b" style="left:85.5px;top:863.0px;width:200px;text-align:left">No Estimation</div>
<div class="tc lk" style="left:1155px;top:863.0px;width:60px;text-align:center">29</div>
<div class="tc lk" style="left:1215px;top:863.0px;width:60px;text-align:center">2</div>
<!--/TABLE-->
</body>
</html>
